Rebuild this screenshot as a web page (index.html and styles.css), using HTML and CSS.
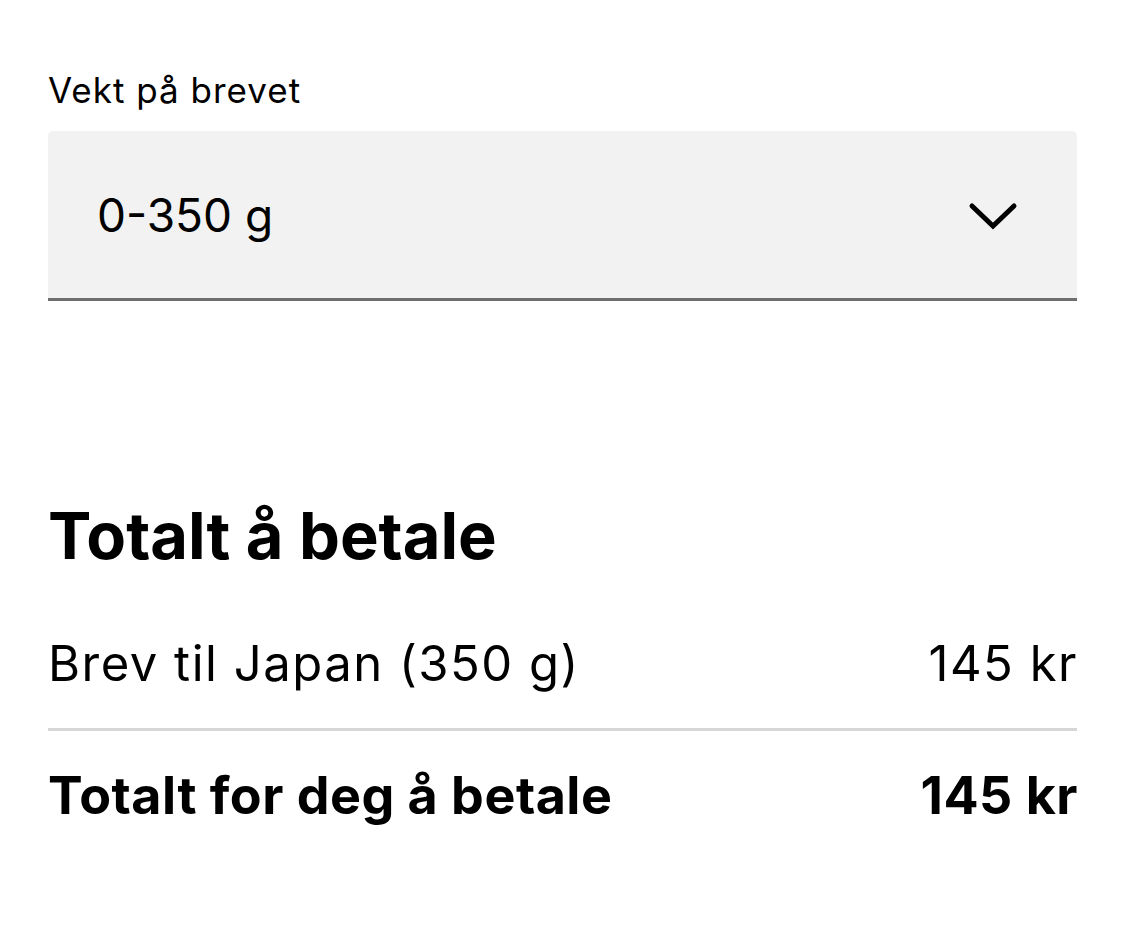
FILE: index.html
```html
<!DOCTYPE html>
<html lang="no">
<head>
<meta charset="utf-8">
<link rel="stylesheet" href="styles.css">
</head>
<body>
<main class="page">
  <div class="field">
    <label class="field-label">Vekt på brevet</label>
    <div class="select">
      <span class="select-value">0-350 g</span>
      <svg class="chevron" width="50" height="30" viewBox="0 0 50 30" aria-hidden="true">
        <path d="M4 5 L25 25 L46 5" fill="none" stroke="#000" stroke-width="5" stroke-linecap="round" stroke-linejoin="miter"/>
      </svg>
    </div>
  </div>
  <section class="summary">
    <h2 class="summary-title">Totalt å betale</h2>
    <div class="row row-item">
      <span>Brev til Japan (350 g)</span>
      <span>145 kr</span>
    </div>
    <div class="row row-total">
      <span>Totalt for deg å betale</span>
      <span>145 kr</span>
    </div>
  </section>
</main>
</body>
</html>
```

FILE: styles.css
```css
html, body {
  margin: 0;
  background: #fff;
}
body {
  font-family: Inter, "Noto Sans", sans-serif;
  color: #000;
}
.page {
  padding: 66px 48px 0 48px;
}
.field {
  display: flex;
  flex-direction: column;
}
.field-label {
  font-size: 35px;
  letter-spacing: 1px;
  line-height: 48px;
  margin-bottom: 17px;
}
.select {
  display: flex;
  align-items: center;
  justify-content: space-between;
  height: 167px;
  background: #f2f2f2;
  border-radius: 5px 5px 0 0;
  border-bottom: 3px solid #6e6e6e;
  padding: 0 59px 0 49px;
}
.select-value {
  font-size: 46px;
  line-height: 1;
}
.chevron {
  display: block;
  margin-top: 2px;
}
.summary {
  margin-top: 197px;
}
.summary-title {
  margin: 0;
  font-size: 65px;
  font-weight: 700;
  line-height: 76px;
}
.row {
  display: flex;
  justify-content: space-between;
  line-height: 60px;
}
.row-item {
  margin-top: 60px;
  padding-bottom: 34px;
  font-size: 49px;
  letter-spacing: 1.5px;
  border-bottom: 3px solid #d6d6d6;
}
.row-total {
  padding-top: 35px;
  font-size: 52px;
  letter-spacing: 0.5px;
  font-weight: 700;
}
.row span:last-child {
  margin-right: -1px;
}
```
